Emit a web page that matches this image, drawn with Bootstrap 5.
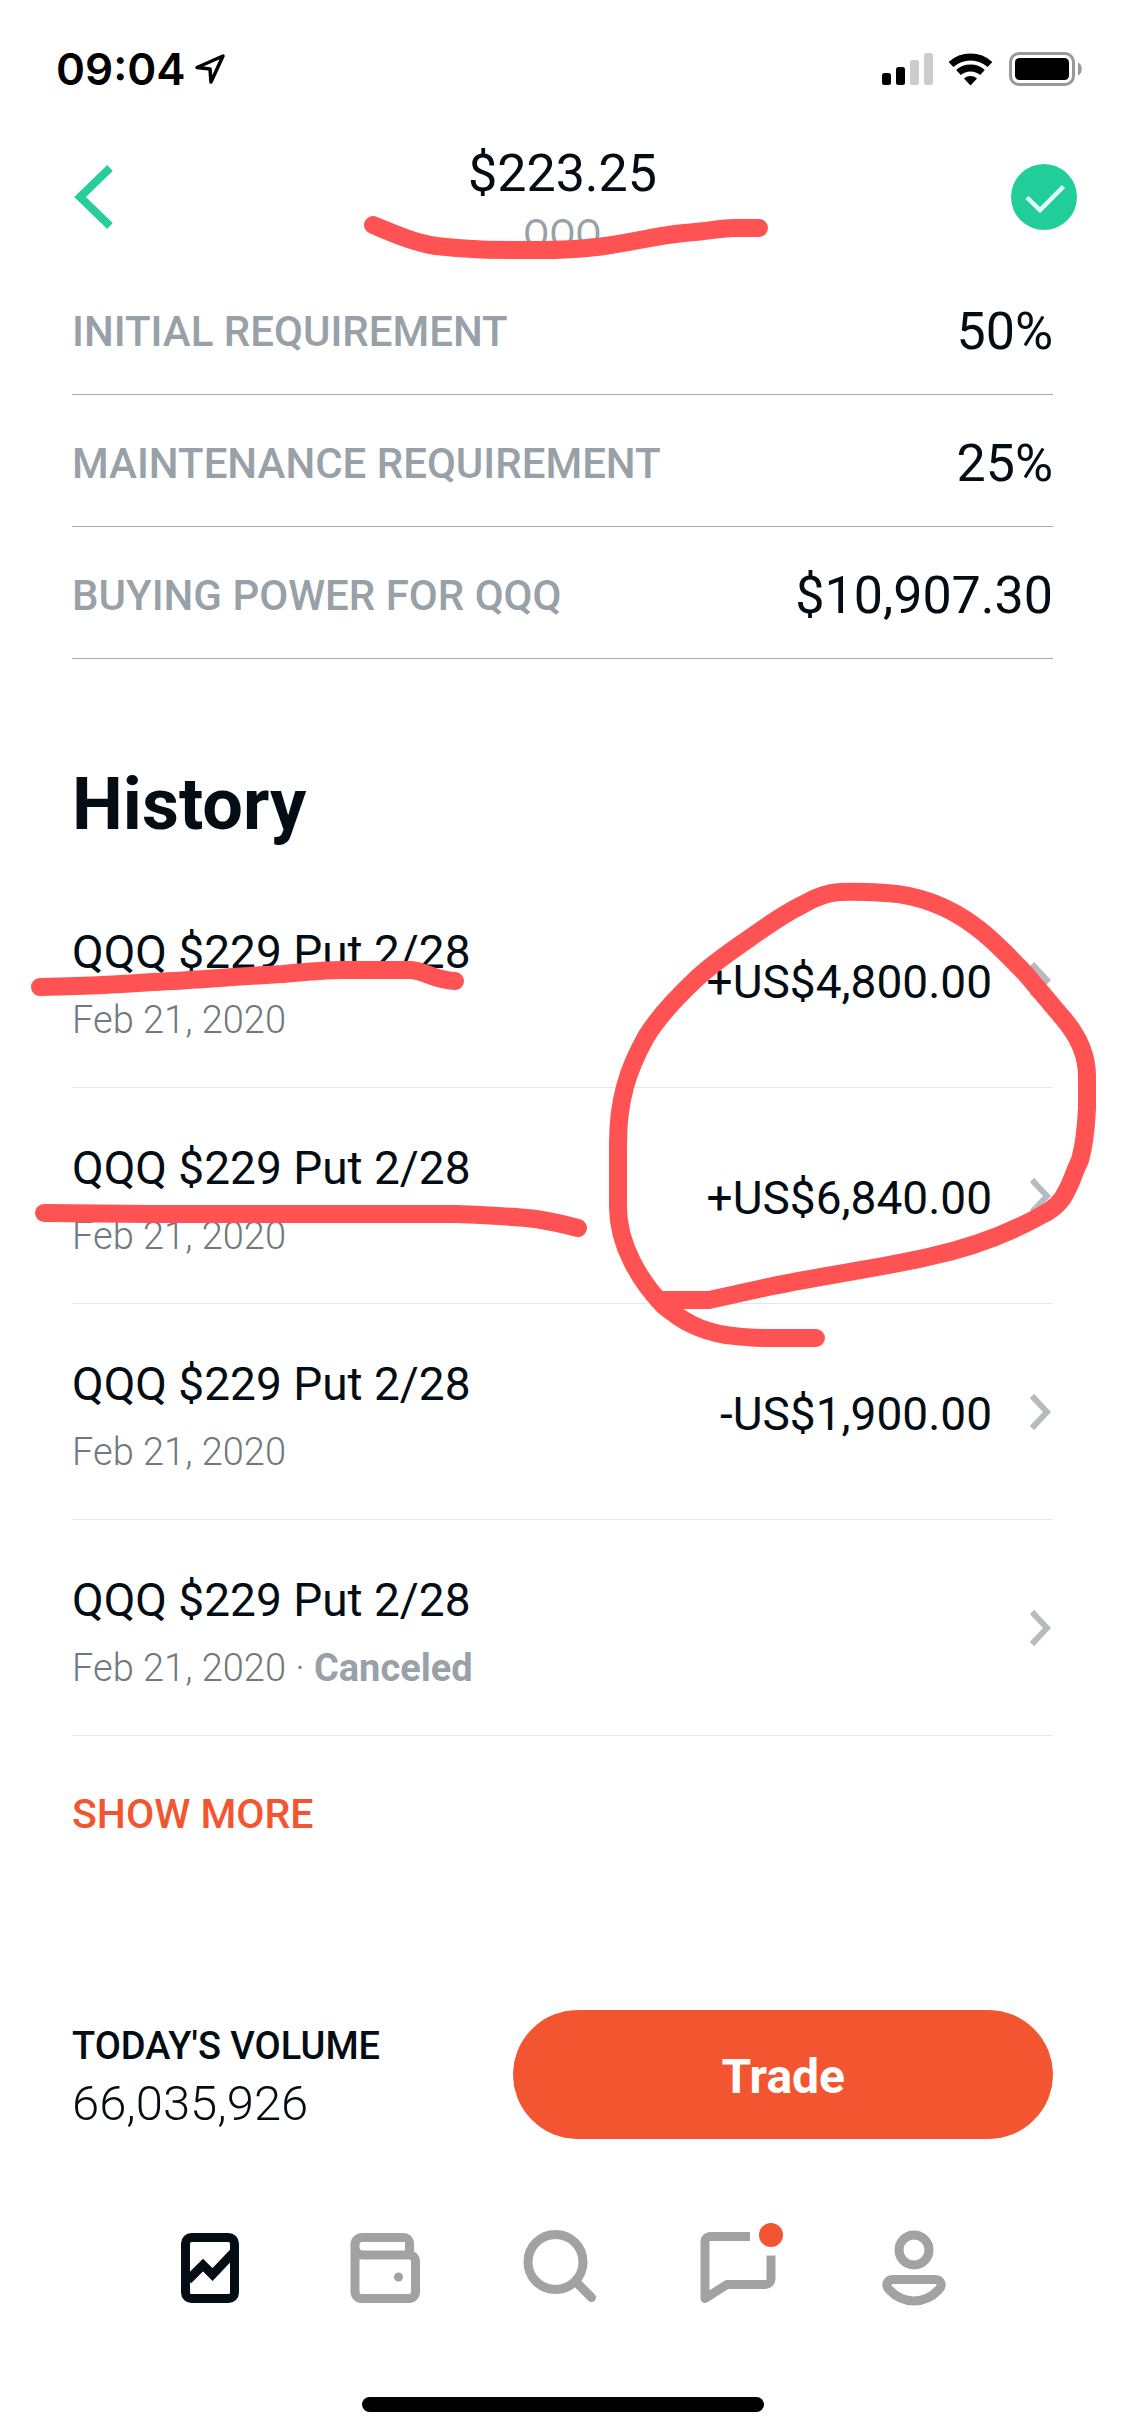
<!DOCTYPE html>
<html lang="en">
<head>
<meta charset="utf-8">
<meta name="viewport" content="width=device-width, initial-scale=1">
<title>QQQ</title>
<link rel="stylesheet" href="https://cdn.jsdelivr.net/npm/bootstrap@5.3.0/dist/css/bootstrap.min.css">
<style>
  :root { --ink: #040d14; --muted: #98a1a8; --accent: #f45531; --mint: #21ce99; }
  body { font-family: Roboto, "Liberation Sans", sans-serif; color: var(--ink); background: #fff; }
  svg { display: block; }
  .screen { min-height: 100vh; }
  .gutter { padding-left: 72px; padding-right: 72px; }
  .status-bar { height: 138px; padding: 0 42px 0 56px; }
  .clock { font: 600 44px/60px Inter, sans-serif; color: #000; }
  .top-bar { padding: 5px 48px 0; }
  .side-cell { flex: 1 1 0; height: 108px; }
  .back-btn { margin-left: 24px; }
  .quote { line-height: 60px; }
  .quote-price, .stat-value { font-size: 52px; font-weight: 400; }
  .quote-price { line-height: 62px; }
  .quote-symbol { font-size: 38px; font-weight: 400; color: var(--muted); line-height: 58px; }
  .stat-line { height: 132px; padding-top: 6px; border-bottom: 1px solid #a3a8ab; }
  .stat-label { font-size: 42px; font-weight: 500; line-height: 60px; color: var(--muted); }
  .section-title { font-size: 72px; font-weight: 700; line-height: 84px; margin: 104px 0 25px; }
  .order { border-bottom: 1px solid #e6e7e8; }
  .order-text { padding: 46px 0 33px; line-height: 68px; }
  .order-name, .order-amount { font-size: 46px; font-weight: 400; }
  .order-date { font-size: 38px; font-weight: 300; color: #71787e; }
  .order-state { font-weight: 700; color: var(--muted); }
  .order-amount { padding-top: 6px; }
  .order-chevron { margin: 0 2px 0 38px; }
  .more-link { font-size: 41px; font-weight: 500; line-height: 60px; color: var(--accent); margin-top: 48px; }
  .volume { line-height: 58px; }
  .volume-label { font-size: 38px; font-weight: 500; }
  .volume-value { font-size: 49px; font-weight: 300; }
  .trade-btn { --bs-btn-color: #fff; --bs-btn-bg: var(--accent); --bs-btn-border-color: var(--accent);
    --bs-btn-hover-color: #fff; --bs-btn-hover-bg: #dd4a28; --bs-btn-hover-border-color: #dd4a28;
    flex: 0 0 55%; height: 129px; padding-top: 11px; font-size: 48px; font-weight: 700; }
  .tabs { padding: 87px 122px; color: #a2a2a2; }
  .tabs svg { overflow: visible; }
  .home-bar { width: 402px; height: 15px; margin-bottom: 24px; background: #000; }
  .ink-marks { left: 0; top: 0; pointer-events: none; }
</style>
<script src="https://cdn.jsdelivr.net/npm/bootstrap@5.3.0/dist/js/bootstrap.bundle.min.js"></script>
</head>
<body>
<div class="screen position-relative d-flex flex-column">

  <div class="status-bar d-flex align-items-center justify-content-between">
    <div class="d-flex align-items-center gap-2">
      <span class="clock">09:04</span>
      <svg width="32" height="32" viewBox="0 0 32 32" fill="none" stroke="#000" stroke-width="3.500" stroke-linejoin="round" aria-hidden="true"><path d="M3 14.500L29 3 17 29 16 16z"/></svg>
    </div>
    <svg width="201" height="34" viewBox="0 0 201 34" role="img" aria-label="Signal, Wi-Fi and battery">
      <rect x="0" y="21" width="9" height="12" rx="2.500"/>
      <rect x="14" y="15" width="9" height="18" rx="2.500"/>
      <rect x="28" y="8" width="9" height="25" rx="2.500" fill="#ccc"/>
      <rect x="42" y="1" width="9" height="32" rx="2.500" fill="#ccc"/>
      <g fill="none" stroke="#000" stroke-width="7">
        <path d="M69 12.500a29 29 0 0 1 39 0"/>
        <path d="M76.500 20.500a18 18 0 0 1 24 0"/>
      </g>
      <path d="M82 26.500a10 10 0 0 1 13 0L88.500 33.500z"/>
      <rect x="128.500" y="1.500" width="63" height="31" rx="8.500" fill="none" stroke="#999" stroke-width="3"/>
      <rect x="133" y="6" width="54" height="22" rx="4.500"/>
      <path d="M196 10.500c5 2 5 11 0 13z" fill="#999"/>
    </svg>
  </div>

  <header class="top-bar d-flex align-items-start">
    <div class="side-cell d-flex align-items-center">
      <button type="button" class="btn back-btn p-0 border-0" aria-label="Back">
        <svg width="44" height="66" viewBox="0 0 44 66" fill="none" stroke="#29cc9b" stroke-width="8"><path d="M38 4L8 33l30 29"/></svg>
      </button>
    </div>
    <div class="quote text-center">
      <div class="quote-price">$223.25</div>
      <div class="quote-symbol">QQQ</div>
    </div>
    <div class="side-cell d-flex align-items-center justify-content-end">
      <button type="button" class="btn p-0 border-0 rounded-circle" aria-label="On watchlist">
        <svg width="66" height="66" viewBox="0 0 66 66"><circle cx="33" cy="33" r="33" fill="#21ce99"/><path d="M16 33.500L29 46 52.500 22.500" fill="none" stroke="#e4fff7" stroke-width="4.500"/></svg>
      </button>
    </div>
  </header>

  <main class="gutter">
    <dl class="m-0">
      <div class="stat-line d-flex align-items-center justify-content-between">
        <dt class="stat-label">INITIAL REQUIREMENT</dt><dd class="stat-value m-0">50%</dd>
      </div>
      <div class="stat-line d-flex align-items-center justify-content-between">
        <dt class="stat-label">MAINTENANCE REQUIREMENT</dt><dd class="stat-value m-0">25%</dd>
      </div>
      <div class="stat-line d-flex align-items-center justify-content-between">
        <dt class="stat-label">BUYING POWER FOR QQQ</dt><dd class="stat-value m-0">$10,907.30</dd>
      </div>
    </dl>

    <h2 class="section-title">History</h2>
    <div>
      <a href="#" class="order d-flex align-items-center text-reset text-decoration-none">
        <div class="order-text flex-grow-1"><div class="order-name">QQQ $229 Put 2/28</div><div class="order-date">Feb 21, 2020</div></div>
        <div class="order-amount">+US$4,800.00</div>
        <svg class="order-chevron" width="21" height="36" viewBox="0 0 21 36" fill="none" stroke="#b4bcc0" stroke-width="6"><path d="M2 2l15 16L2 34"/></svg>
      </a>
      <a href="#" class="order d-flex align-items-center text-reset text-decoration-none">
        <div class="order-text flex-grow-1"><div class="order-name">QQQ $229 Put 2/28</div><div class="order-date">Feb 21, 2020</div></div>
        <div class="order-amount">+US$6,840.00</div>
        <svg class="order-chevron" width="21" height="36" viewBox="0 0 21 36" fill="none" stroke="#b4bcc0" stroke-width="6"><path d="M2 2l15 16L2 34"/></svg>
      </a>
      <a href="#" class="order d-flex align-items-center text-reset text-decoration-none">
        <div class="order-text flex-grow-1"><div class="order-name">QQQ $229 Put 2/28</div><div class="order-date">Feb 21, 2020</div></div>
        <div class="order-amount">-US$1,900.00</div>
        <svg class="order-chevron" width="21" height="36" viewBox="0 0 21 36" fill="none" stroke="#b4bcc0" stroke-width="6"><path d="M2 2l15 16L2 34"/></svg>
      </a>
      <a href="#" class="order d-flex align-items-center text-reset text-decoration-none">
        <div class="order-text flex-grow-1"><div class="order-name">QQQ $229 Put 2/28</div><div class="order-date">Feb 21, 2020 · <span class="order-state">Canceled</span></div></div>
        <svg class="order-chevron" width="21" height="36" viewBox="0 0 21 36" fill="none" stroke="#b4bcc0" stroke-width="6"><path d="M2 2l15 16L2 34"/></svg>
      </a>
    </div>
    <a href="#" class="more-link d-inline-block text-decoration-none">SHOW MORE</a>
  </main>

  <section class="gutter d-flex align-items-center justify-content-between mt-auto">
    <div class="volume">
      <div class="volume-label">TODAY'S VOLUME</div>
      <div class="volume-value">66,035,926</div>
    </div>
    <button type="button" class="btn trade-btn rounded-pill">Trade</button>
  </section>

  <nav class="tabs nav nav-fill" aria-label="Main">
    <a href="#" class="nav-item text-reset d-flex justify-content-center" aria-label="Stocks" aria-current="page">
      <svg width="84" height="84" viewBox="0 0 84 84" fill="none" stroke="#040d14" stroke-width="9"><rect x="17.500" y="11.500" width="49" height="61" rx="6"/><path d="M20 54l15-15 9.500 9.500L65 27"/></svg>
    </a>
    <a href="#" class="nav-item text-reset d-flex justify-content-center" aria-label="Cash">
      <svg width="84" height="84" viewBox="0 0 84 84" fill="none" stroke="currentColor" stroke-width="9"><path d="M65.500 29V17a5.500 5.500 0 0 0-5.500-5.500H18a7 7 0 0 0-7 7V66a6.500 6.500 0 0 0 6.500 6.500H65a6.500 6.500 0 0 0 6.500-6.500V35a6 6 0 0 0-6-6H19a8 8 0 0 1-8-8"/><circle cx="54.500" cy="51" r="4.500" fill="currentColor" stroke="none"/></svg>
    </a>
    <a href="#" class="nav-item text-reset d-flex justify-content-center" aria-label="Search">
      <svg width="84" height="84" viewBox="0 0 84 84" fill="none" stroke="currentColor" stroke-width="9" stroke-linecap="round"><circle cx="34.500" cy="36" r="27.500"/><path d="M54.500 55.500l16 16"/></svg>
    </a>
    <a href="#" class="nav-item text-reset d-flex justify-content-center" aria-label="Messages, new">
      <svg width="84" height="84" viewBox="0 0 84 84" fill="none" stroke="currentColor" stroke-width="9" stroke-linejoin="round"><path d="M53 10.500H13a5 5 0 0 0-5 5V72.500L30 58.500H68.500a5.500 5.500 0 0 0 5.500-5.500V29.500"/><circle cx="74" cy="9" r="12" fill="#f45531" stroke="none"/></svg>
    </a>
    <a href="#" class="nav-item text-reset d-flex justify-content-center" aria-label="Account">
      <svg width="84" height="84" viewBox="0 0 84 84" fill="none" stroke="currentColor" stroke-width="9"><circle cx="41" cy="24" r="15"/><path d="M20 53.500H62C68.500 53.500 70 60 65.500 64C51.500 78.500 30.500 78.500 16.500 64C12 60 13.500 53.500 20 53.500z"/></svg>
    </a>
  </nav>
  <div class="home-bar rounded-pill mx-auto"></div>

  <!-- Pen strokes drawn over the screen -->
  <svg class="ink-marks position-absolute" width="1125" height="1400" viewBox="0 0 1125 1400" fill="none" stroke="#ff5252" stroke-width="18" stroke-linecap="round" stroke-linejoin="round" aria-hidden="true">
    <path d="M373 225C395 234 415 243 436 246C470 250 490 250 539 250C615 250 640 237 684 233C710 231 722 228 734 228H759"/>
    <path d="M40 987C90 986 125 984 153 982C200 980 240 976 283 974Q325 970 344 970H409C425 970 432 980 455 981"/>
    <path d="M44 1213L153 1214H452C480 1215 510 1216 536 1219Q555 1222 578 1228"/>
    <path d="M816 1338H768C745 1338 740 1337 726 1335C700 1331 682 1321 663 1305C640 1281 618 1245 618 1207V1143C618 1100 628 1069 646 1037C658 1017 675 999 695 980C712 964 728 953 747 940C768 925 785 913 802 905Q822 893 840 892C858 891 870 892 886 893C920 895 951 908 976 927C995 941 1008 956 1025 973L1062 1017C1077 1034 1087 1053 1087 1076V1108C1086 1130 1084 1146 1080 1160C1075 1170 1072 1181 1067 1190C1062 1202 1054 1209 1042 1215C1008 1234 970 1248 928 1257C880 1268 830 1274 768 1287L709 1300H658"/>
  </svg>
</div>
</body>
</html>
